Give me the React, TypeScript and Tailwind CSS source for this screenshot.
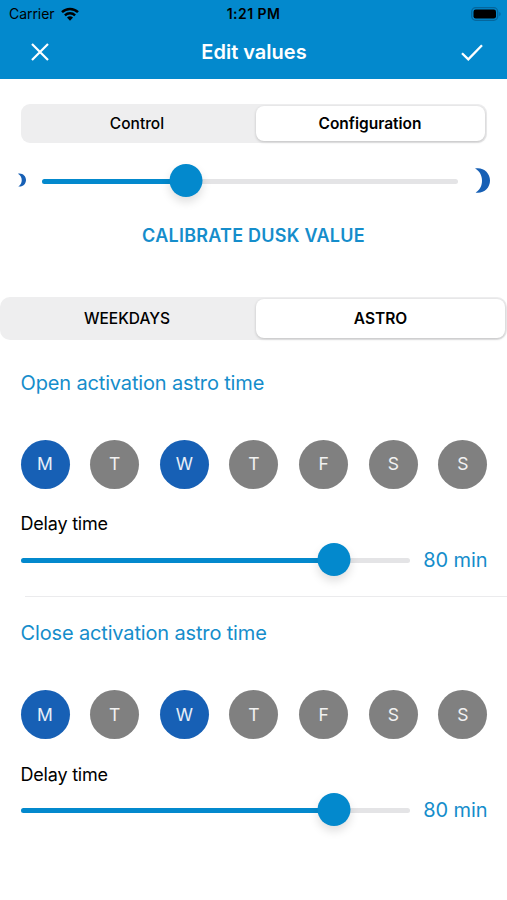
import React, { useState } from "react";
import clsx from "clsx";

const DAYS = ["M", "T", "W", "T", "F", "S", "S"];

const Moon = ({ className }: { className: string }) => (
  <svg viewBox="0 0 15 25" className={className} fill="#1760b5">
    <path d="M0 .6C8-1.200 15 4.800 15 12.500S8.500 26 .6 24.600C9.500 19.500 9 5 0 .6Z" />
  </svg>
);

const StatusBar = () => (
  <div className="grid h-[27px] grid-cols-3 items-center text-black">
    <div className="flex items-center gap-[6px] pl-[9px]">
      <span className="text-[14px] tracking-[-0.05px]">Carrier</span>
      <svg viewBox="0 0 18 14" className="h-[14px] w-[18px]" fill="none">
        <path d="M1 5.200a11.600 11.600 0 0 1 16 0" stroke="black" strokeWidth="2.500" />
        <path d="M3.900 8.300a7.400 7.400 0 0 1 10.200 0" stroke="black" strokeWidth="2.400" />
        <path d="M6 10.600a4.400 4.400 0 0 1 6 0L9 13.700Z" fill="black" />
      </svg>
    </div>
    <div className="text-center text-[14px] font-semibold tracking-[0.45px]">1:21 PM</div>
    <div className="flex justify-end pr-[5px]">
      <svg viewBox="0 0 31 14" className="h-[14px] w-[31px]">
        <rect x=".7" y=".7" width="26" height="12.600" rx="4" fill="none" stroke="#05669c" strokeWidth="1.300" />
        <rect x="2.500" y="2.500" width="22.500" height="9" rx="2.200" fill="black" />
        <path d="M28.300 5v4.200c1.800-.7 1.800-3.500 0-4.200Z" fill="#05669c" />
      </svg>
    </div>
  </div>
);

const NavBar = () => (
  <div className="flex h-[52px] items-center justify-between pr-[24px] pb-[2px] pl-[31px] text-white">
    <button aria-label="Close">
      <svg viewBox="0 0 18 18" className="h-[18px] w-[18px]" fill="none" stroke="white" strokeWidth="2.200">
        <path d="M1 1l16 16M17 1L1 17" />
      </svg>
    </button>
    <h1 className="pr-[2px] text-[20px] font-semibold">Edit values</h1>
    <button aria-label="Save">
      <svg viewBox="0 0 22 17" className="h-[17px] w-[22px]" fill="none" stroke="white" strokeWidth="2.300">
        <path d="M1 9.200l6.300 6.200L21 1.300" />
      </svg>
    </button>
  </div>
);

type SegmentedProps = {
  options: string[];
  value: number;
  onChange: (index: number) => void;
  className?: string;
};

const Segmented = ({ options, value, onChange, className }: SegmentedProps) => (
  <div className={clsx("grid bg-[#eeeeef] p-[2px]", className)}>
    {options.map((option, i) => (
      <button
        key={option}
        onClick={() => onChange(i)}
        className={clsx(
          "text-[15.5px] text-black",
          value === i
            ? "rounded-[8px] bg-white font-semibold shadow-[0_1px_3px_rgba(0,0,0,0.2)]"
            : "pr-[4px] font-medium"
        )}
      >
        {option}
      </button>
    ))}
  </div>
);

const Slider = ({ percent, className }: { percent: number; className?: string }) => (
  <div className={clsx("relative flex h-[33px] items-center pt-[2px]", className)}>
    <div className="h-[5px] w-full overflow-hidden rounded-full bg-[#e4e4e6]">
      <div className="h-full bg-[#0389cd]" style={{ width: `${percent}%` }} />
    </div>
    <div
      className="absolute top-0 h-[33px] w-[33px] -translate-x-1/2 rounded-full bg-[#0389cd] shadow-[0_5px_10px_rgba(0,0,0,0.13)]"
      style={{ left: `${percent}%` }}
    />
  </div>
);

const AstroSection = ({ title, divider }: { title: string; divider?: boolean }) => {
  const [active, setActive] = useState<number[]>([0, 2]);

  const toggleDay = (day: number) => {
    setActive((prev) =>
      prev.includes(day) ? prev.filter((d) => d !== day) : [...prev, day]
    );
  };

  return (
    <section>
      <div className="pt-[22px] pr-[19.5px] pb-[20px] pl-[20.5px]">
        <h2 className="text-[20px] leading-[28px] tracking-[-0.15px] text-[#158dcb]">{title}</h2>
        <div className="mt-[43px] flex justify-between">
          {DAYS.map((day, i) => (
            <button
              key={i}
              onClick={() => toggleDay(i)}
              className={clsx(
                "h-[49px] w-[49px] rounded-full pt-px text-[17.5px] text-white/90",
                active.includes(i) ? "bg-[#1760b5]" : "bg-[#808080]"
              )}
            >
              {day}
            </button>
          ))}
        </div>
        <p className="mt-[23.5px] text-[18px] leading-[24px] tracking-[-0.2px] text-black">Delay time</p>
        <div className="mt-[6.5px] flex items-center justify-between">
          <Slider percent={80.5} className="w-[389px]" />
          <span className="pt-px text-[20px] tracking-[-0.1px] whitespace-nowrap text-[#158dcb]">80 min</span>
        </div>
      </div>
      {divider && <div className="ml-[25px] h-[1.5px] bg-[#ebebed]" />}
    </section>
  );
};

export default function App() {
  const [tab, setTab] = useState(1);
  const [mode, setMode] = useState(1);

  return (
    <div className="h-[900px] w-[507px] overflow-hidden bg-white font-['Inter','Liberation_Sans',sans-serif]">
      <header className="h-[79px] bg-[#0389cd]">
        <StatusBar />
        <NavBar />
      </header>
      <main>
        <div className="px-[20.5px] pt-[25px]">
          <Segmented
            options={["Control", "Configuration"]}
            value={tab}
            onChange={setTab}
            className="h-[38.5px] grid-cols-[233px_1fr] rounded-[9px]"
          />
        </div>
        <div className="mt-[21px] flex items-center pr-[17px] pl-[18px]">
          <Moon className="h-[14px] w-[8px]" />
          <Slider percent={34.5} className="mr-[17px] ml-[16px] flex-1" />
          <Moon className="h-[25px] w-[15px]" />
        </div>
        <button className="mt-[27.5px] block w-full text-center text-[18px] leading-[24px] font-semibold tracking-[0.25px] text-[#158dcb]">
          CALIBRATE DUSK VALUE
        </button>
        <Segmented
          options={["WEEKDAYS", "ASTRO"]}
          value={mode}
          onChange={setMode}
          className="mt-[49px] mb-[6.5px] h-[43px] grid-cols-[254px_1fr] rounded-[10px]"
        />
        <AstroSection title="Open activation astro time" divider />
        <AstroSection title="Close activation astro time" />
      </main>
    </div>
  );
}
